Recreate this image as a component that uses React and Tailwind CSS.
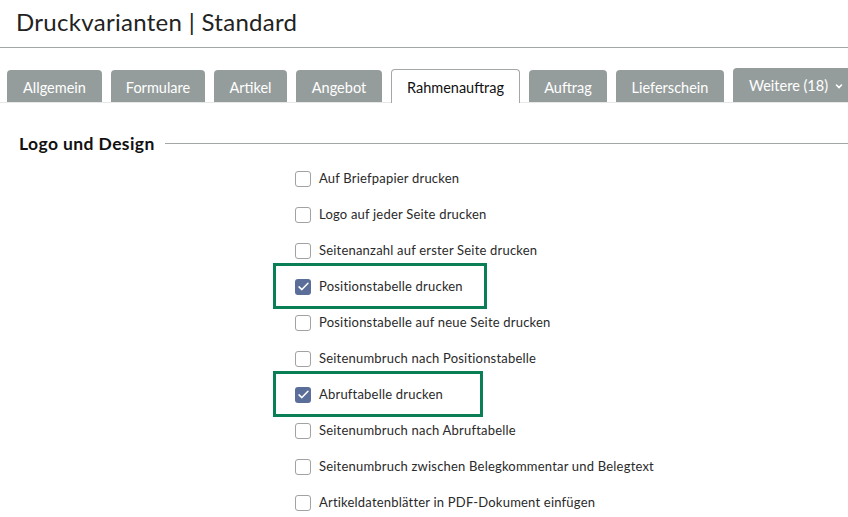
import React from "react";

const tabs = [
  { label: "Allgemein", w: "w-[95px]" },
  { label: "Formulare", w: "w-[94px]" },
  { label: "Artikel", w: "w-[73px]" },
  { label: "Angebot", w: "w-[86px]" },
  { label: "Rahmenauftrag", w: "w-[129px]", active: true },
  { label: "Auftrag", w: "w-[78px]" },
  { label: "Lieferschein", w: "w-[108px]" },
];

const options = [
  { label: "Auf Briefpapier drucken" },
  { label: "Logo auf jeder Seite drucken" },
  { label: "Seitenanzahl auf erster Seite drucken" },
  { label: "Positionstabelle drucken", checked: true, box: "w-[214px]" },
  { label: "Positionstabelle auf neue Seite drucken" },
  { label: "Seitenumbruch nach Positionstabelle" },
  { label: "Abruftabelle drucken", checked: true, box: "w-[210px]" },
  { label: "Seitenumbruch nach Abruftabelle" },
  { label: "Seitenumbruch zwischen Belegkommentar und Belegtext" },
  { label: "Artikeldatenblätter in PDF-Dokument einfügen" },
];

const Checkbox = ({ checked }) =>
  checked ? (
    <span className="flex h-4 w-4 shrink-0 items-center justify-center rounded-[3px] bg-[#5b6d99]">
      <svg viewBox="0 0 16 16" className="h-[13px] w-[13px]" fill="none" stroke="white" strokeWidth="1.9" strokeLinecap="round" strokeLinejoin="round">
        <path d="M2.5 8.5l3.5 3.3L13.5 4" />
      </svg>
    </span>
  ) : (
    <span className="h-4 w-4 shrink-0 rounded-[3px] border border-[#a2a2a2] bg-white" />
  );

const App = () => {
  return (
    <div className="h-[517px] w-[848px] overflow-hidden bg-white font-['Lato',sans-serif] text-[#222]">
      <div className="h-[48px] border-b border-[#a3a7a7] pl-4 pt-[10px]">
        <h1 className="text-[24px] leading-none tracking-[0.3px] text-[#222]">Druckvarianten | Standard</h1>
      </div>

      <div className="mt-[20px] flex items-end gap-[9px] border-b border-[#e6e8e8] pl-[7px]">
        {tabs.map((t) =>
          t.active ? (
            <div key={t.label} className={`${t.w} -mb-px flex h-[34px] shrink-0 items-center justify-center rounded-t-[4px] border border-b-0 border-[#a3a7a7] bg-white pt-[3px] text-[14.5px] text-[#111]`}>
              {t.label}
            </div>
          ) : (
            <div key={t.label} className={`${t.w} flex h-[32px] shrink-0 items-center justify-center rounded-t-[4px] bg-[#959d9c] pt-[3px] text-[14.5px] text-white`}>
              {t.label}
            </div>
          )
        )}
        <div className="flex h-[34px] w-[124px] shrink-0 items-center gap-1.5 rounded-t-[4px] bg-[#959d9c] pl-4 pt-[1px] text-[14.5px] text-white">
          Weitere (18)
          <svg viewBox="0 0 10 10" className="h-2.5 w-2.5" fill="none" stroke="white" strokeWidth="1.6" strokeLinecap="round">
            <path d="M2.5 4l2.5 2.5L7.5 4" />
          </svg>
        </div>
      </div>

      <div className="mt-[32px] flex items-center gap-[10px] pl-[19px]">
        <h2 className="text-[17.5px] font-bold leading-none tracking-[0.4px] text-[#111]">Logo und Design</h2>
        <div className="h-px flex-1 bg-[#a3a7a7]" />
      </div>

      <div className="mt-[8px] flex flex-col pl-[295px]">
        {options.map((o) => (
          <div key={o.label} className="relative flex h-9 items-center gap-2 text-[13px] tracking-[0.2px] text-[#2a2a2a]">
            <Checkbox checked={o.checked} />
            <span>{o.label}</span>
            {o.box && (
              <div className={`${o.box} pointer-events-none absolute -left-[22px] -top-[6px] h-[46px] border-[3px] border-[#0a7f56]`} />
            )}
          </div>
        ))}
      </div>
    </div>
  );
};

export default App;
